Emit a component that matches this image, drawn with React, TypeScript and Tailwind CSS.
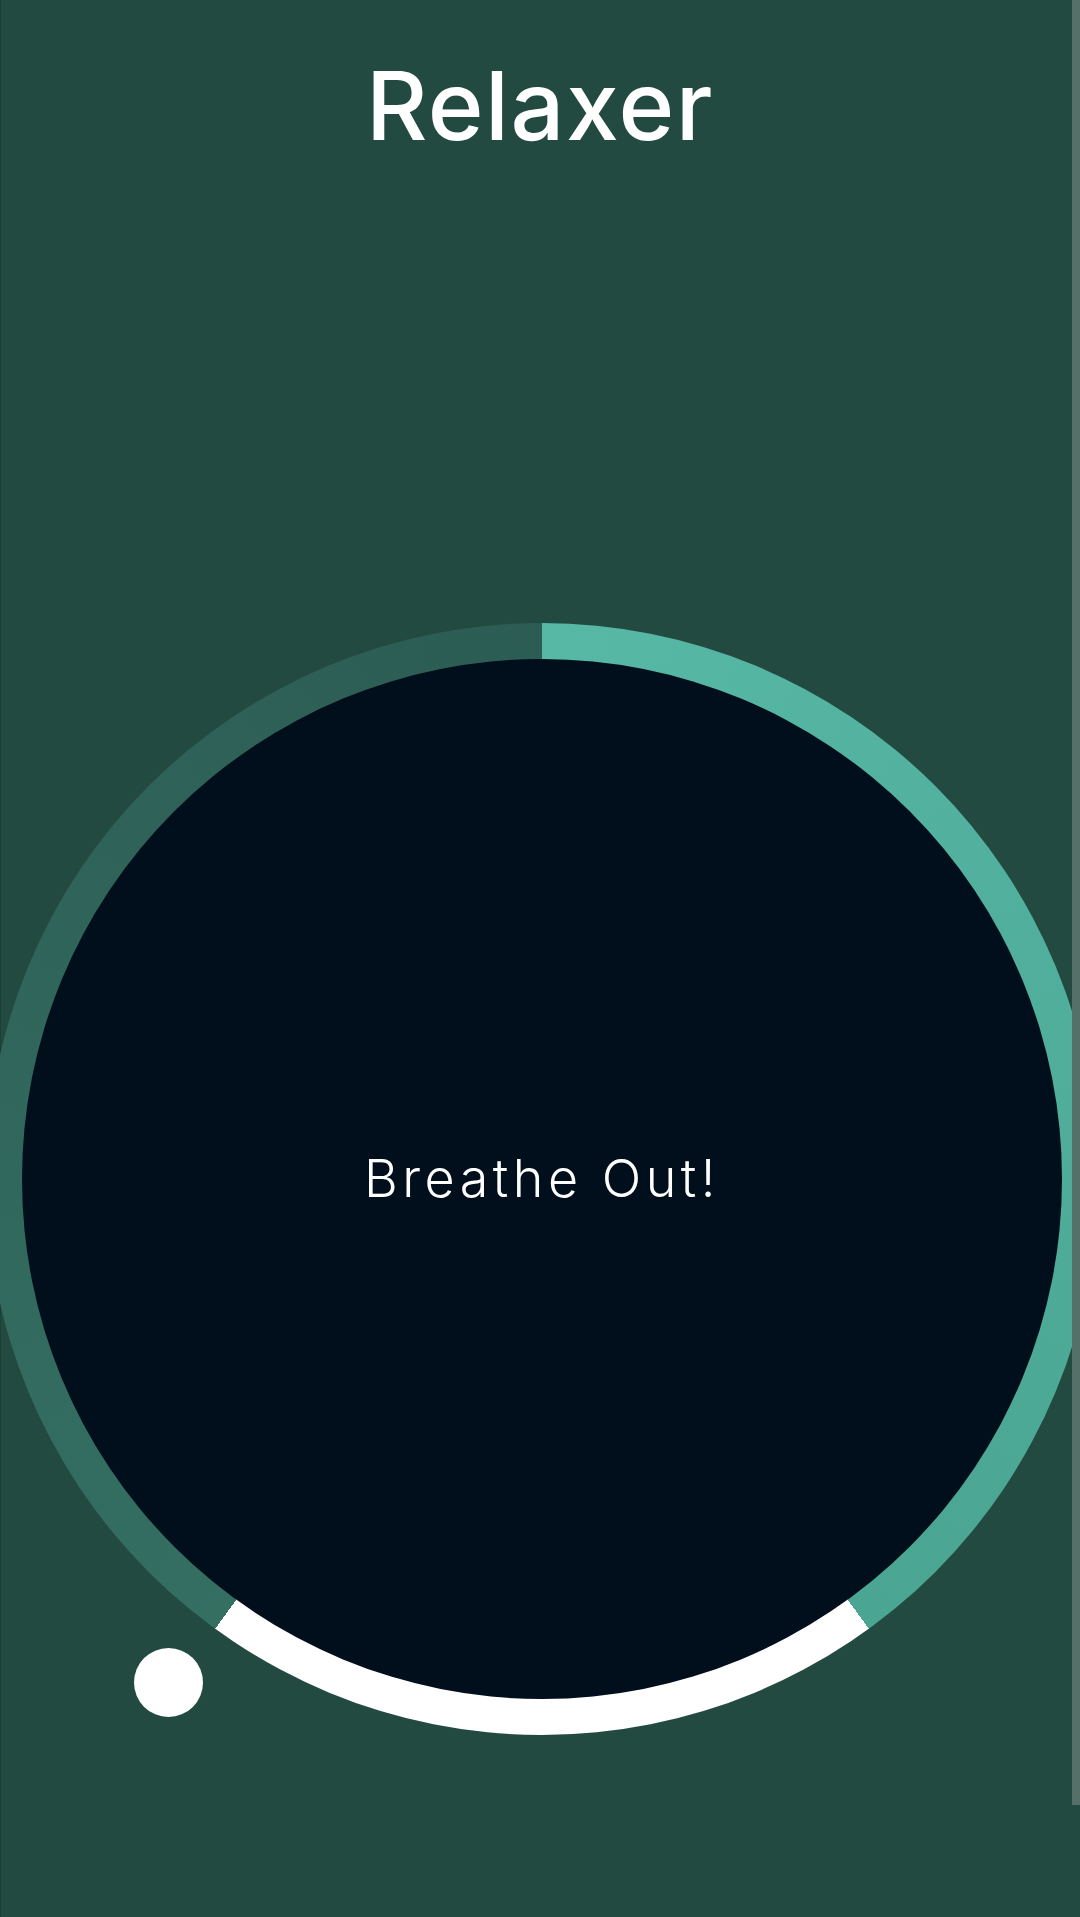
import React from "react";

export default function App() {
  return (
    <div className="relative w-[1080px] h-[1917px] overflow-hidden bg-[#234a40] flex flex-col items-center font-['Inter',sans-serif]">
      <div className="w-[1px] h-full bg-[#1c3f36] absolute left-0 top-0" />
      <h1 className="mt-[58px] text-[95px] leading-none font-medium text-white tracking-[1.5px]">
        Relaxer
      </h1>
      <div className="relative mt-[470px] ml-[4px] shrink-0 w-[1112px] h-[1112px] rounded-full bg-[conic-gradient(#56b8a5_0deg,#4aa592_144deg,#ffffff_144deg,#ffffff_216deg,#346f62_216deg,#2c5c53_360deg)] flex items-center justify-center">
        <div className="w-[1040px] h-[1040px] rounded-full bg-[#010e1b] flex items-center justify-center">
          <span className="text-white text-[52px] font-light tracking-[4.5px] leading-none">
            Breathe Out!
          </span>
        </div>
        <div className="absolute left-[148px] top-[1025px] w-[69px] h-[69px] rounded-full bg-white" />
      </div>
      <div className="absolute right-0 top-0 w-[8px] h-[1805px] bg-[#557069]" />
    </div>
  );
}
